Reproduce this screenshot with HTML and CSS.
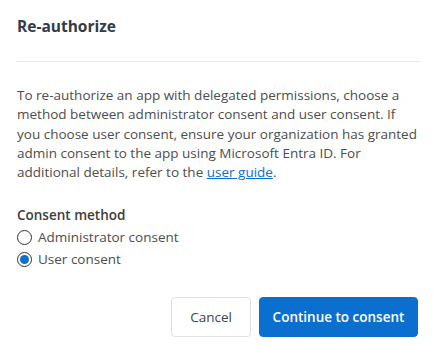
FILE: index.html
```html
<!DOCTYPE html>
<html>
<head>
<meta charset="utf-8">
<link rel="stylesheet" href="styles.css">
</head>
<body>
<div class="dialog">
  <header class="dialog-header">
    <h2 class="dialog-title">Re-authorize</h2>
  </header>
  <div class="dialog-body">
    <p class="desc">To re-authorize an app with delegated permissions, choose a method between administrator consent and user consent. If you choose user consent, ensure your organization has granted admin consent to the app using Microsoft Entra ID. For additional details, refer to the <a href="#" class="link">user guide</a>.</p>
    <fieldset class="group">
      <legend class="group-label">Consent method</legend>
      <label class="radio"><span class="radio-circle"></span><span>Administrator consent</span></label>
      <label class="radio"><span class="radio-circle checked"></span><span>User consent</span></label>
    </fieldset>
  </div>
  <footer class="dialog-footer">
    <button class="btn btn-secondary">Cancel</button>
    <button class="btn btn-primary">Continue to consent</button>
  </footer>
</div>
</body>
</html>
```
FILE: styles.css
```css
html, body {
  margin: 0;
  padding: 0;
  background: #ffffff;
}
body {
  font-family: "Open Sans", "Noto Sans", sans-serif;
  color: #4a4a4a;
  font-size: 13.5px;
}
.dialog {
  width: 438px;
  height: 346px;
  box-sizing: border-box;
  padding: 0 18px 0 17px;
  display: flex;
  flex-direction: column;
}
.dialog-header {
  padding-top: 16px;
  height: 62px;
  border-bottom: 1px solid #e6e6e6;
  box-sizing: border-box;
}
.dialog-title {
  margin: 0;
  font-size: 15.5px;
  font-weight: 700;
  color: #323b48;
  line-height: 21px;
}
.dialog-body {
  padding-top: 24px;
}
.desc {
  margin: 0;
  line-height: 19.3px;
  color: #4d4d4d;
}
.link {
  color: #0b6fcf;
  text-decoration: underline;
}
.group {
  border: 0;
  margin: 22px 0 0;
  padding: 0;
  display: flex;
  flex-direction: column;
}
.group-label {
  padding: 0;
  font-weight: 600;
  color: #3d3d3d;
  line-height: 22px;
}
.radio {
  display: flex;
  align-items: center;
  gap: 6px;
  line-height: 22px;
  color: #4d4d4d;
}
.radio-circle {
  width: 13px;
  height: 13px;
  border: 1px solid #333;
  border-radius: 50%;
  box-sizing: content-box;
  position: relative;
  flex: none;
}
.radio-circle.checked::after {
  content: "";
  position: absolute;
  left: 2px;
  top: 2px;
  width: 9px;
  height: 9px;
  border-radius: 50%;
  background: #0b6fcf;
}
.dialog-footer {
  margin-top: auto;
  padding-bottom: 9px;
  display: flex;
  justify-content: flex-end;
  gap: 8px;
  padding-right: 2px;
}
.btn {
  font-family: "Open Sans", "Noto Sans", sans-serif;
  font-size: 13.5px;
  height: 40px;
  border-radius: 4px;
  padding: 0;
  white-space: nowrap;
  cursor: pointer;
}
.btn-secondary {
  width: 80px;
  background: #fff;
  border: 1px solid #e1e1e1;
  color: #3d4450;
}
.btn-primary {
  width: 159px;
  background: #0b6fcf;
  border: 1px solid #0b6fcf;
  color: #fff;
  font-weight: 600;
}
```
